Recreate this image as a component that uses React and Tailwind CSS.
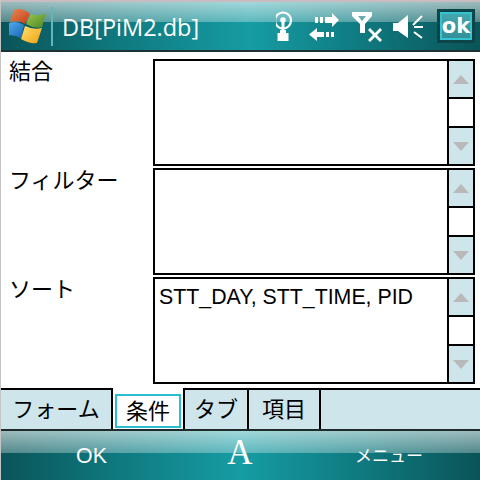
const cjk = "font-['Liberation_Sans','Noto_Sans_CJK_JP',sans-serif]"

function Scrollbar() {
  return (
    <div className="flex w-[26px] shrink-0 flex-col border-l-2 border-black">
      <div className="flex flex-1 items-center justify-center bg-[#cfe5ec]">
        <svg width="16" height="9" viewBox="0 0 16 9"><path d="M8 0 16 9H0Z" fill="#b9b9b9" /></svg>
      </div>
      <div className="h-[31px] shrink-0 border-y-2 border-black bg-white" />
      <div className="flex flex-1 items-center justify-center bg-[#cfe5ec]">
        <svg width="16" height="9" viewBox="0 0 16 9"><path d="M0 0H16L8 9Z" fill="#b9b9b9" /></svg>
      </div>
    </div>
  )
}

function FieldRow({ label, value }) {
  return (
    <div className="flex h-[107px] pl-[8px] pr-[5px]">
      <div className="w-[144px] shrink-0 text-[22px] leading-[26px] text-black">{label}</div>
      <div className="flex flex-1 border-2 border-black bg-white">
        <div className="flex-1 pl-[4px] pt-[3px] text-[21.33px] leading-[30px] text-black">{value}</div>
        <Scrollbar />
      </div>
    </div>
  )
}

function Logo() {
  return (
    <svg width="38" height="38" viewBox="9 8 38 38" className="shrink-0">
      <defs>
        <linearGradient id="r" x1="0" y1="0" x2="1" y2="1"><stop offset="0" stopColor="#e88a50" /><stop offset="1" stopColor="#c63a18" /></linearGradient>
        <linearGradient id="g" x1="0" y1="0" x2="1" y2="1"><stop offset="0" stopColor="#9cc64e" /><stop offset="1" stopColor="#4c8a24" /></linearGradient>
        <linearGradient id="b" x1="0" y1="0" x2="1" y2="1"><stop offset="0" stopColor="#5cb2ec" /><stop offset="1" stopColor="#1464b8" /></linearGradient>
        <linearGradient id="y" x1="0" y1="0" x2="1" y2="1"><stop offset="0" stopColor="#ffe070" /><stop offset="1" stopColor="#f2a010" /></linearGradient>
      </defs>
      <path d="M14 11Q22 8 30 15L25 25Q18 20 10 23Z" fill="url(#r)" />
      <path d="M31 15Q38 18 46 14L42 28Q34 30 26 25Z" fill="url(#g)" />
      <path d="M9 24Q17 21 24 26L21 39Q13 35 5 37Z" fill="url(#b)" />
      <path d="M25 27Q33 31 42 29L37 44Q29 45 21 40Z" fill="url(#y)" />
    </svg>
  )
}

// drawn in page coordinates, the viewBox starts at x=276
function StatusIcons() {
  return (
    <svg width="150" height="36" viewBox="276 8 150 36" fill="white" className="shrink-0">
      {/* antenna */}
      <circle cx="283" cy="20.500" r="8" fill="none" stroke="white" strokeWidth="2.200" />
      <circle cx="283" cy="20" r="2.800" />
      <path d="M281.500 20h3v10h1.500v3h2.500v8h-11v-8h2.500v-3h1.500Z" />
      {/* arrows */}
      <path d="M315 17h3v6h-3ZM320 17h3v6h-3ZM325 17h7v-4l7 7-7 7v-4h-7Z" />
      <path d="M309 34.500l8-6.500v4h7v5h-7v4ZM326 32h3v5h-3ZM331 32h3v5h-3Z" />
      {/* signal */}
      <path fillRule="evenodd" d="M352 12h20v4l-7 8v9h-5v-9l-8-8ZM358 16l4 5 4-5Z" />
      <path d="M370 28l5 5 5-5 2 2-5 5 5 5-2 2-5-5-5 5-2-2 5-5-5-5Z" />
      {/* speaker */}
      <path d="M393 23h5l10-8v23l-10-7h-5Z" />
      <path d="M413 25l9-9M414 27h9M414 32l8 6" stroke="white" strokeWidth="2" fill="none" />
    </svg>
  )
}

export default function App() {
  return (
    <div className={`flex h-[480px] w-[480px] flex-col overflow-hidden border-l border-[#c4c4c4] bg-white ${cjk}`}>
      <header className="flex h-[52px] shrink-0 items-center border-t-2 border-b-2 border-t-[#c8bcc0] border-b-[#1f3233] pl-[8px] [background:linear-gradient(180deg,rgba(255,255,255,0.6)_0,rgba(255,255,255,0.3)_20px,transparent_20px),linear-gradient(90deg,#0a5458_0,#0f7a80_25%,#169ca3_52%,#0f7a80_75%,#0a5458_100%)]">
        <Logo />
        <div className="ml-[4px] h-[39px] w-[2px] shrink-0 bg-[#62b7bd]" />
        <div className="ml-[9px] w-[214px] shrink-0 pt-[4px] font-['Open_Sans',sans-serif] text-[23.5px] leading-none text-white">DB[PiM2.db]</div>
        <StatusIcons />
        <div className="ml-[11px] flex h-[34px] w-[38px] shrink-0 items-center justify-center border-[3px] border-[#0d4448] bg-[linear-gradient(180deg,#45a8b0,#2f8d95)] font-['DejaVu_Sans',sans-serif] text-[21px] font-bold leading-none text-white shadow-[inset_0_0_0_2px_#35c3d0]">ok</div>
      </header>

      <main className="flex flex-1 flex-col gap-[2px] pt-[7px]">
        <FieldRow label="結合" />
        <FieldRow label="フィルター" />
        <FieldRow label="ソート" value="STT_DAY, STT_TIME, PID" />
      </main>

      <nav className="flex h-[43px] shrink-0 border-b-2 border-[#1f2a2b] bg-[#cfe5ec] text-[22px] text-black">
        <div className="flex w-[112px] items-center justify-center border-r-2 border-t-2 border-black">フォーム</div>
        <div className="flex w-[70px] items-start bg-white px-[2px] pt-[6px]">
          <div className="flex h-[34px] w-full items-center justify-center border-2 border-[#2cbdd0]">条件</div>
        </div>
        <div className="flex w-[66px] items-center justify-center border-x-2 border-t-2 border-black">タブ</div>
        <div className="flex w-[72px] items-center justify-center border-r-2 border-t-2 border-black">項目</div>
        <div className="flex-1 border-t-2 border-black" />
      </nav>

      <footer className="flex h-[49px] shrink-0 items-center text-[21.33px] text-white [background:linear-gradient(180deg,rgba(255,255,255,0.6)_0,rgba(255,255,255,0.3)_22px,transparent_22px),linear-gradient(90deg,#0a5458_0,#0f7a80_25%,#169ca3_50%,#0f7a80_75%,#0a5458_100%)]">
        <div className="w-[181px] pt-[2px] text-center">OK</div>
        <div className="w-[116px] pb-[6px] text-center font-['Liberation_Serif',serif] text-[35px] leading-none">A</div>
        <div className="flex-1 pt-[2px] text-center text-[17px]">メニュー</div>
      </footer>
    </div>
  )
}
